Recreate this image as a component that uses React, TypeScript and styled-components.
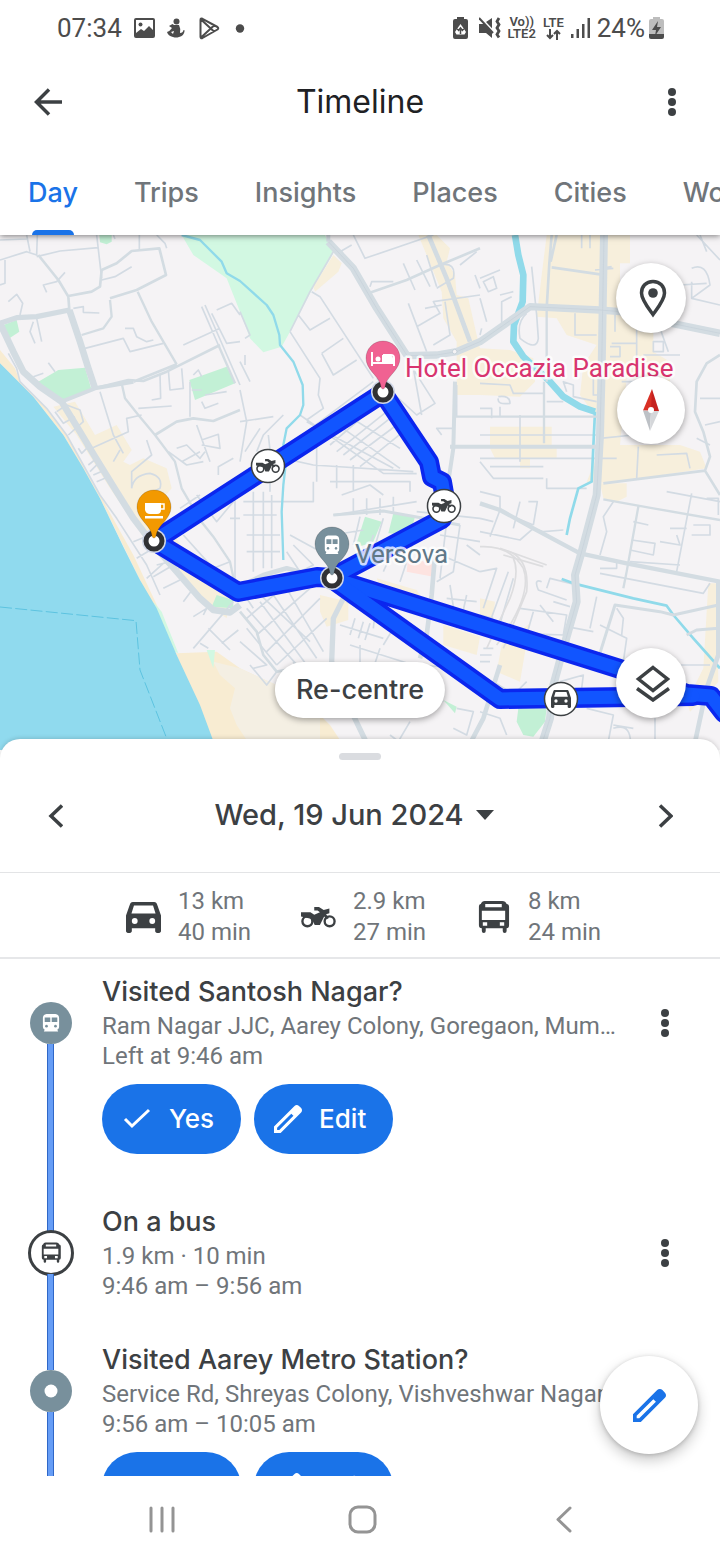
import React from "react";
import styled, { createGlobalStyle, css } from "styled-components";

const ink = "#3c4043";
const muted = "#70757a";
const blue = "#1a73e8";
const slate = "#78909c";
const display = `Inter, Roboto, sans-serif`;
const body = `Roboto, "Liberation Sans", sans-serif`;

const GlobalStyle = createGlobalStyle`
  * { box-sizing: border-box; }
  body { margin: 0; background: #fff; color: ${ink}; font-family: ${body}; }
  button { border: 0; padding: 0; background: none; color: inherit; font: inherit; cursor: pointer; }
  svg { display: block; flex: none; }
  h1, h2, p, ul { margin: 0; padding: 0; font-weight: inherit; }
`;

const Screen = styled.div`
  display: flex;
  flex-direction: column;
  height: 100vh;
  overflow: hidden;
  background: #fff;
`;

const StatusBar = styled.div`
  flex: none;
  display: flex;
  align-items: center;
  justify-content: space-between;
  height: 56px;
  padding: 0 56px 0 57px;
  color: #4c4c4c;
  font-size: 26px;
`;
const StatusGroup = styled.div<{ $gap: number }>`
  display: flex;
  align-items: center;
  gap: ${(p) => p.$gap}px;
`;
const NetworkLabel = styled.div`
  display: flex;
  flex-direction: column;
  align-items: center;
  font-size: 13px;
  font-weight: 600;
  line-height: 12px;
`;

const Header = styled.header`
  flex: none;
  position: relative;
  z-index: 2;
  box-shadow: 0 1px 6px rgba(0, 0, 0, 0.5);
  clip-path: inset(0 0 -10px 0);
  background: #fff;
`;
const AppBar = styled.div`
  display: grid;
  grid-template-columns: 48px 1fr 48px;
  align-items: center;
  height: 92px;
  padding: 0 24px;
`;
const Title = styled.h1`
  text-align: center;
  font: 400 32px/40px ${display};
  color: #202124;
`;
const IconButton = styled.button`
  display: grid;
  place-items: center;
  width: 48px;
  height: 48px;
`;
const Tabs = styled.nav`
  display: flex;
  gap: 56px;
  height: 87px;
  padding: 0 28px;
  overflow: hidden;
`;
const Tab = styled.button<{ $active?: boolean }>`
  flex: none;
  display: flex;
  flex-direction: column;
  align-items: center;
  justify-content: space-between;
  padding-top: 27px;
  color: ${(p) => (p.$active ? blue : muted)};
  font: 500 27px/36px ${display};
  &::after {
    content: "";
    width: 42px;
    height: 5px;
    border-radius: 5px 5px 0 0;
    background: ${(p) => (p.$active ? blue : "transparent")};
  }
`;

const MapArea = styled.section`
  flex: none;
  position: relative;
  height: 515px;
  background: #f5f3f5;
`;
const MapCanvas = styled.svg`
  width: 100%;
  height: 100%;
`;
const floating = css`
  position: absolute;
  background: #fff;
  box-shadow: 0 2px 6px rgba(0, 0, 0, 0.35);
`;
const RoundControl = styled.button<{ $top: number; $size: number }>`
  ${floating}
  top: ${(p) => p.$top}px;
  right: ${(p) => 69 - p.$size / 2}px;
  display: grid;
  place-items: center;
  width: ${(p) => p.$size}px;
  height: ${(p) => p.$size}px;
  border-radius: 50%;
`;
const Recentre = styled.button`
  ${floating}
  top: 427px;
  left: 50%;
  transform: translateX(-50%);
  height: 56px;
  padding: 0 21px;
  border-radius: 28px;
  font: 500 27px/56px ${display};
  color: ${ink};
  white-space: nowrap;
`;

const Sheet = styled.main`
  flex: 1;
  min-height: 0;
  position: relative;
  display: flex;
  flex-direction: column;
  margin-top: -11px;
  border-radius: 20px 20px 0 0;
  background: #fff;
  box-shadow: 0 -1px 4px rgba(0, 0, 0, 0.15);
`;
const Handle = styled.div`
  flex: none;
  align-self: center;
  width: 42px;
  height: 7px;
  margin-top: 14px;
  border-radius: 4px;
  background: #dadce0;
`;
const DateRow = styled.div`
  flex: none;
  display: flex;
  align-items: center;
  justify-content: space-between;
  height: 113px;
  padding: 0 31px;
  border-bottom: 1px solid #e3e4e6;
`;
const DateButton = styled.button`
  display: flex;
  align-items: center;
  gap: 12px;
  padding: 0 12px 2px 0;
  font: 500 29px/40px ${display};
`;
const Stats = styled.ul`
  flex: none;
  display: grid;
  grid-template-columns: repeat(3, 175px);
  justify-content: center;
  height: 86px;
  padding: 13px 0 0 57px;
  border-bottom: 2px solid #e6e7e9;
  list-style: none;
`;
const Stat = styled.li`
  display: flex;
  align-items: center;
  gap: 17px;
  height: 62px;
  color: ${muted};
  font-size: 24px;
  line-height: 31px;
  white-space: nowrap;
  svg { color: ${ink}; }
`;

const ListWrap = styled.div`
  flex: 1;
  min-height: 0;
  position: relative;
`;
const List = styled.ul`
  height: 100%;
  overflow-y: auto;
  scrollbar-width: none;
  list-style: none;
`;
const Item = styled.li`
  display: grid;
  grid-template-columns: 101px minmax(0, 1fr) 48px;
  column-gap: 1px;
  padding-right: 31px;
`;
const Rail = styled.div`
  display: flex;
  flex-direction: column;
  align-items: center;
`;
const Segment = styled.div<{ $lead?: boolean; $hidden?: boolean }>`
  width: 7px;
  ${(p) => (p.$lead ? "height: 43px;" : "flex: 1;")}
  border: solid #2f67c7;
  border-width: 0 1px;
  background: #669df6;
  visibility: ${(p) => (p.$hidden ? "hidden" : "visible")};
`;
const Marker = styled.div<{ $travel?: boolean }>`
  display: grid;
  place-items: center;
  width: 42px;
  height: 42px;
  border-radius: 50%;
  background: ${slate};
  color: #fff;
  ${(p) =>
    p.$travel &&
    css`
      width: 46px;
      height: 46px;
      margin: -2px 0;
      border: 3px solid ${ink};
      background: #fff;
      color: ${ink};
    `}
`;
const Details = styled.div`
  padding: 16px 20px 25px 0;
`;
const Place = styled.h2`
  margin-bottom: 2px;
  font: 500 27px/34px ${display};
`;
const Line = styled.p`
  overflow: hidden;
  color: ${muted};
  font-size: 24px;
  line-height: 30px;
  text-overflow: ellipsis;
  white-space: nowrap;
  &:last-child { padding-bottom: 1px; }
`;
const Actions = styled.div`
  display: flex;
  gap: 13px;
  margin: 13px 0 10px;
`;
const Pill = styled.button`
  display: flex;
  align-items: center;
  gap: 17px;
  height: 70px;
  padding: 0 27px 0 20px;
  border-radius: 35px;
  background: ${blue};
  color: #fff;
  font: 500 26px/36px ${display};
`;
const MenuCell = styled.div`
  padding-top: 40px;
`;
const Fab = styled.button`
  position: absolute;
  right: 22px;
  bottom: 22px;
  display: grid;
  place-items: center;
  width: 98px;
  height: 98px;
  border-radius: 50%;
  background: #fff;
  color: ${blue};
  box-shadow: 0 6px 14px rgba(0, 0, 0, 0.22), 0 1px 4px rgba(0, 0, 0, 0.18);
`;
const SystemNav = styled.nav`
  flex: none;
  position: relative;
  z-index: 1;
  display: grid;
  grid-template-columns: repeat(3, 1fr);
  place-items: center;
  height: 84px;
  padding: 2px 56px 0 61px;
  background: #fff;
  color: #949494;
`;

/* ---------- icons ---------- */

const MoreIcon = () => (
  <svg width="10" height="30" viewBox="0 0 10 30" fill={ink}>
    <circle cx="5" cy="5" r="4" /><circle cx="5" cy="15" r="4" /><circle cx="5" cy="25" r="4" />
  </svg>
);
const CarIcon = ({ size = 35 }: { size?: number }) => (
  <svg width={size} height={size} viewBox="3 4 18 18" fill="currentColor" fillRule="evenodd">
    <path d="M18.92 6.01C18.72 5.42 18.16 5 17.5 5h-11c-.66 0-1.21.42-1.42 1.01L3 12v8c0 .55.45 1 1 1h1c.55 0 1-.45 1-1v-1.5h12V20c0 .55.45 1 1 1h1c.55 0 1-.45 1-1v-8zM7.5 16.300a1.500 1.500 0 1 1 0-3 1.500 1.500 0 0 1 0 3zm9 0a1.500 1.500 0 1 1 0-3 1.500 1.500 0 0 1 0 3zM5.800 11l1.300-4.200h9.800L18.200 11z" />
  </svg>
);
const BikeIcon = ({ size = 35 }: { size?: number }) => (
  <svg width={size} height={size * 0.6} viewBox="0 0 74 44" fill="currentColor">
    <circle cx="13.500" cy="30" r="10.500" fill="none" stroke="currentColor" strokeWidth="5" />
    <circle cx="60.500" cy="30" r="10.500" fill="none" stroke="currentColor" strokeWidth="5" />
    <path d="M0 11h20l8 5 12-5-5-4h-7V0h10l10 6 12-3v10l-7 2 6 8-5 3-5-6-9 18H29l-6-13L0 20z" />
  </svg>
);
const BusIcon = ({ size = 35 }: { size?: number }) => (
  <svg width={size} height={size} viewBox="0 0 36 36" fill="currentColor" fillRule="evenodd">
    <path d="M9 1h18q3.500 0 4.500 3 2.500 0 2.500 3v19q0 3-2.500 3v3q0 2-2 2t-2-2v-3H10v3q0 2-2 2t-2-2v-3q-3 0-3-3V7q0-3 2-3 1-3 4-3zM9.500 4v3.500h17V4zM6 11v9.500h24V11zM7 23v3.500h4.500V23zM24.500 23v3.500H29V23z" />
  </svg>
);
const TrainShape = ({ hole }: { hole: string }) => (
  <>
    <path d="M1 5q0-4 4-4.500h10q4 .500 4 4.500v10q0 2-2 3l1 2H2l1-2q-2-1-2-3z" fill="#fff" />
    <path d="M3 4.500h6.200v5H3zM10.800 4.500H17v5h-6.200z" fill={hole} />
    <circle cx="5" cy="14" r="1.500" fill={hole} /><circle cx="15" cy="14" r="1.500" fill={hole} />
  </>
);
const PencilIcon = ({ size }: { size: number }) => (
  <svg width={size} height={size} viewBox="3 3 18 18" fill="currentColor" fillRule="evenodd">
    <path d="M3 21v-4.250L16.200 3.575q.6-.575 1.425-.575t1.425.600L20.425 5q.575.600.575 1.400t-.575 1.425L7.250 21zM5 19h1.400l9.100-9.050-1.400-1.400L5 17.600z" />
  </svg>
);
const CheckIcon = () => (
  <svg width="30" height="24" viewBox="0 0 30 24" fill="none" stroke="currentColor" strokeWidth="3">
    <path d="M3 12l7 7L27 3" />
  </svg>
);
const Chevron = ({ right }: { right?: boolean }) => (
  <svg width="16" height="24" viewBox="0 0 16 24" fill="none" stroke={ink} strokeWidth="3.500">
    <path d={right ? "M3 1.500L14 12 3 22.500" : "M15 1.500L4 12l11 10.500"} />
  </svg>
);

const StatusLeftIcons = () => (
  <>
    <svg width="21" height="20" viewBox="0 0 21 20" fill="none" stroke="#4c4c4c" strokeWidth="2">
      <rect x="1" y="1" width="19" height="18" rx="1" />
      <circle cx="6.500" cy="6.500" r="2" fill="#4c4c4c" stroke="none" />
      <path d="M2 15l5-4 3 2 5-5 5 5v6H2z" fill="#4c4c4c" stroke="none" />
    </svg>
    <svg width="18" height="20" viewBox="0 0 18 20" fill="#4c4c4c">
      <circle cx="9.500" cy="3.500" r="3" />
      <path d="M7 7h5q2 4 1 8 3 0 3.500-3l1.200.500Q17 18 12 19q-3 1-6 0-5-1-6-5 3-1 5-4l-3-2 3.500-2z" />
      <path d="M4 14l3-1-1 3z" fill="#fff" />
    </svg>
    <svg width="23" height="23" viewBox="-2 0 23 23" fill="none" stroke="#4c4c4c" strokeWidth="2" strokeLinejoin="round">
      <path d="M1.500 3q0-2 2-1.200L18.500 10q1.500 1.200 0 2.500L3.500 21q-2 .8-2-1.200zM2 2.500L15 14.500M2 20.500L15 8.500" />
    </svg>
    <svg width="13" height="9" viewBox="0 0 13 9" fill="#4c4c4c"><circle cx="8" cy="4.500" r="4.200" /></svg>
  </>
);
const StatusRightIcons = () => (
  <>
    <svg width="15" height="22" viewBox="0 0 15 22" fill="#4c4c4c">
      <path d="M4 0h7v2h2q2 0 2 2v16q0 2-2 2H2q-2 0-2-2V4q0-2 2-2h2z" />
      <path d="M7.500 7l3.500 5 2 3-1.500 2.500h-8L2 15l2-3z" fill="#fff" />
      <path d="M7.500 17v-5M5 14l2.500-3 2.500 3M4 12l1.500 1M11 12l-1.500 1" stroke="#4c4c4c" strokeWidth="1.500" fill="none" />
    </svg>
    <svg width="22" height="22" viewBox="0 0 22 22" fill="#4c4c4c">
      <path d="M0 7h4l9-6v20l-6-5H0z" />
      <path d="M1 0l14 15" stroke="#fff" strokeWidth="2" />
      <path d="M0 1l14 15" stroke="#4c4c4c" strokeWidth="2" />
      <path d="M20 1l-2 3.500 2 3-2 3.500 2 3-2 3.500 2 3" fill="none" stroke="#4c4c4c" strokeWidth="2.800" />
    </svg>
  </>
);

/* ---------- map ---------- */

const seaD = "M0 385L100 485 190 600 250 700 300 790 370 935 420 1035 470 1120 530 1260 600 1410 650 1545H0z";
const areas: [string, string][] = [
  ["#f8ecd2", "M0 345L45 400 60 440 140 520 200 600 300 780 400 960 480 1130 530 1255 650 1250 720 1300 850 1360 930 1410 990 1470 1040 1545H640L530 1260 420 1035 300 790 190 600 100 485 0 385z"],
  ["#f4efe3", "M640 1280L720 1300 850 1360 960 1410V1545H760L710 1470 690 1420 705 1360 660 1320z"],
  ["#f7efdc", "M160 515L225 500 255 550 285 600 350 570 395 645 370 680 390 690 430 670 500 700 515 760 480 800 500 860 560 960 690 1090 680 1150 600 1090 440 920 330 760 230 600z"],
  ["#c2f0d5", "M115 440L175 405 255 398 275 465 185 498z"],
  ["#c2f0d5", "M10 270L50 255 58 290 25 312z"],
  ["#c2f0d5", "M568 435L680 395 705 445 585 495z"],
  ["#c2f0d5", "M298 0H335V20L320 28 300 22z"],
  ["#d2f8e2", "M545 0H975L1000 55 930 175 870 290 845 335 790 352 750 310 720 230 680 130 580 60z"],
  ["#f7efdc", "M1000 60L1025 85 1015 110 945 170 940 155z"],
  ["#f7efdc", "M1255 0H1310L1350 40 1340 80 1365 120 1370 180 1405 190 1430 300 1440 340V480H1370V320L1330 250 1325 170z"],
  ["#f7efdc", "M1640 0H1800L1890 0V85H1860V190L1920 290 1960 290V350L2010 380V450L1880 430 1860 630 2040 630 2100 650 2120 700 1830 745 1760 740 1810 620 1800 560 1740 480 1750 390 1790 330 1700 300 1670 250 1610 245 1625 120z"],
  ["#f7efdc", "M1440 340L1530 345 1600 370 1605 440 1560 485 1440 480z"],
  ["#f7efdc", "M1470 575H1655V640H1670V670H1590V700H1560V670H1485L1470 640z"],
  ["#f7efdc", "M1800 745H1880V785L1850 800 1810 790z"],
  ["#f7efdc", "M960 1080L1045 1100 1045 1155 980 1175 960 1130z"],
  ["#f7efdc", "M1130 1030L1250 1065 1290 1125 1150 1075z"],
  ["#f7efdc", "M1330 1170L1440 1205 1430 1260 1330 1230z"],
  ["#f7efdc", "M1440 1090L1485 1100 1475 1180 1440 1165z"],
  ["#f7efdc", "M1505 1230L1590 1165 1560 1340 1490 1310z"],
  ["#f7efdc", "M2125 1045H2150L2155 1340 2120 1380 2070 1430 2060 1400 2110 1300z"],
  ["#c2f0d5", "M1095 845L1145 860 1120 920 1065 940z"],
  ["#c2f0d5", "M1180 835L1245 845 1230 900 1165 895z"],
  ["#c2f0d5", "M650 1080L700 1095 700 1120 635 1115z"],
  ["#c2f0d5", "M1555 1420H1640L1635 1460 1600 1505 1570 1500 1550 1460z"],
  ["#c2f0d5", "M1330 1395L1370 1415 1365 1435z"],
  ["#d2f8e2", "M460 1100L485 1130 535 1255 525 1250z"],
  ["#d2f8e2", "M620 1245H645L640 1300z"],
  ["#fde3e0", "M1225 965L1305 990 1300 1025 1220 1010z"],
];

const creeks: [number, string][] = [
  [7, "M545 0L600 15 665 80 680 115 720 138 800 210 820 240 838 300 840 330 880 380 908 450 910 510 900 540 860 580 850 630 858 680 850 750 845 830 850 975"],
  [20, "M1545 0L1555 60 1570 120 1568 200 1542 270 1540 320 1570 365 1650 440 1690 485 1740 515 1785 530"],
  [8, "M1785 530L1775 740 1735 760 1710 850 1700 900"],
  [8, "M1685 1032L1720 1045 1900 1090 2000 1112 2020 1140 2080 1210 2160 1300"],
];

const majorRoads: [number, string][] = [
  [20, "M0 265L40 350 70 410 120 455 185 500 240 590 285 665 350 770 400 850 465 935 530 1010 600 1090 640 1125 690 1132 720 1110"],
  [16, "M0 265L50 248 110 245 208 225"],
  [20, "M208 225L240 320 265 400 285 460"],
  [12, "M185 500L285 460 400 440"],
  [8, "M285 460L385 435 430 438 500 410 660 330M400 440L530 388"],
  [8, "M115 60L175 135 205 185 208 225M205 183L275 170 300 155 305 105 350 85 395 48 478 40 498 120 410 165 330 190"],
  [7, "M330 195L335 245 310 280 245 300M413 170L455 260 530 388"],
  [7, "M365 445L375 490 415 540 465 600 525 680 545 760 600 855 640 905 690 980 705 1050"],
  [8, "M465 600L530 560 580 550 640 558 720 525"],
  [7, "M655 330L705 445"],
  [22, "M985 20L1060 100 1130 220 1220 360M1220 362L1310 360 1370 350 1440 320 1590 215 1800 225 1860 230 1990 260 2160 295"],
  [12, "M985 20L985 0"],
  [14, "M1285 0L1340 130 1410 320"],
  [8, "M1105 175L1220 135 1320 90 1440 40"],
  [24, "M1812 0L1808 220 1805 400 1800 600 1790 780 1745 950 1725 1020 1730 1100 1690 1240 1660 1350 1650 1450 1620 1545"],
  [8, "M1655 0L1648 85 1640 220M1655 97L1800 118M1670 0L1652 80"],
  [12, "M1365 440L1360 640 1345 740M1350 635H1800"],
  [7, "M1365 545H1800M1632 440V625M1640 215V440"],
  [8, "M1810 745L2115 707 2130 665 2110 590 2085 530 2090 440 2120 385 2160 360M2115 707L2160 780"],
  [13, "M1440 805L1500 825 1600 880 1740 955 1880 985 2160 1040"],
  [7, "M1810 793L1960 820 2160 855M1915 815L1880 1010 1870 1060"],
  [14, "M720 1055L790 1020 860 1000 900 1010"],
  [16, "M1030 1090L1000 1150 995 1280 1040 1400 1110 1545"],
  [8, "M720 1130L770 1190 790 1260 830 1310 940 1290"],
  [14, "M1305 960L1295 1080 1280 1200 1260 1270M1500 1290L1450 1450 1400 1545"],
  [9, "M1000 840L1150 828 1300 855 1380 870"],
  [14, "M2155 1040L2155 1260 2120 1360 2080 1545"],
  [9, "M1795 1270L1845 1110 1980 1130 2020 1140 2155 1110M2060 1200L2090 1185 2155 1180"],
];

const minorRoads: string[] = [
  "M0 75L80 50 110 60 112 0M110 65L180 48 295 38M290 0L305 130M80 0L90 50M15 75V145L0 150M0 15L80 12M60 240L68 205 50 178 25 200",
  "M195 112L170 140 130 150 140 172M305 135L345 125 395 95M340 0L345 12M418 0V45M470 0L495 25 500 40M100 260L90 290 105 325M110 250L125 320",
  "M220 220L250 215 250 232 298 234M255 340L370 310 390 350 490 325M375 280L400 280 410 305 440 320 460 315M145 383L165 410M100 425L130 415",
  "M300 470L340 600 370 655M275 640L385 590 380 550 425 540M360 645L340 680M440 615L455 660 395 710 395 760M170 530L200 510 240 525 250 560 205 600M165 530L190 565 225 545",
  "M395 760Q400 720 450 715 490 725 480 760L440 780M480 420L482 490 455 495M415 520L515 513M505 405L510 465 550 460 545 400M570 440V545M580 420L595 405 605 425",
  "M605 215L655 330M615 210L720 450M650 225L695 205 720 240M635 235L680 325 720 320M550 330L660 280M605 500L615 520 655 505M575 465H605M615 480L680 470",
  "M505 650L560 690 610 680M530 640L560 630 600 670 615 650M545 680L600 650M590 570L630 680M605 615L655 598 660 640 605 630M655 720L655 695 700 670",
  "M235 640L245 655 260 640 255 620M265 690L290 670M270 710L300 680M280 720L315 705M290 740L325 725M25 355L50 400 60 440 140 520 200 600 300 780 350 850 440 990 480 1080",
  "M400 920L450 900 490 960M410 970L460 940M440 1030L490 985M460 1025L520 990M490 1060L540 1035M550 1100L580 1060M590 780L650 860 700 800M540 820L600 780",
  "M470 990L550 970 530 1015M580 1145L620 1120 610 1140M580 1240L700 1100M600 1225L625 1240M625 1180L690 1245M665 1225L715 1185M705 780V1050M690 850H720M550 900L640 1000 690 980",
  "M1000 50L930 170 870 290M935 170L960 185 1120 430M895 240L930 285 990 250M870 290L960 430 955 480 970 520 920 555M1060 0L1095 70 1300 0M1025 50L1050 90M1055 30L1020 50",
  "M1110 155L1115 140 1180 140M1210 85L1245 165M1250 75L1290 155M1280 60L1310 155M1320 90Q1370 80 1360 130L1310 160M1225 205L1280 350M1250 275L1320 235 1300 200 1440 180M1275 220L1325 210",
  "M1130 430L1250 540 1305 505 1200 340M1240 400L1265 540M965 355L1030 310M965 355L1000 420 1070 375M1430 50L1380 90M1425 120L1440 160M1335 200L1350 300 1300 330",
  "M900 540L1150 715 1250 716M920 590L1120 440M960 600L1140 460M990 630L1140 500M1010 650L1160 530M1030 660L1170 550M1050 675L1190 570M1080 695L1210 590M920 560L1180 700M1000 560L1200 700M1040 540L1200 640",
  "M850 670L940 690 1240 710M950 620V740M1010 690V760M1060 690V770M810 770V700L850 640M770 650L790 600 850 540M720 465L740 560 720 680M720 560L820 545M735 650L780 580M745 700L815 690 805 600M720 380L750 440",
  "M820 800H940V740M990 740H1230V770M1025 780L1110 750 1150 780M720 230L750 300 735 310M735 390V360M1000 840L1250 800M1060 790V840M1100 790V840M1140 790V840M1180 785V830",
  "M1360 580H1310L1325 600M1370 545V450M1440 130L1500 105M1440 300L1445 280M1440 190L1460 260M1450 140L1480 125 1490 160 1465 170zM1500 180L1540 170M1505 265V200L1535 185",
  "M1595 95L1610 240 1615 310Q1610 350 1560 310 1550 260 1580 235M1725 235V300H1790M1845 235V290M1835 325H1910M1910 270V430M1830 335H1860V365H1830M1785 105L1840 100M1745 40V0M1770 40V0M1800 100L1835 95",
  "M1960 320H1990V350H1960zM1980 280L2005 350M2075 100Q2120 80 2130 150L2075 190 2160 210M2040 150L2120 145M2075 140V190M2090 0L2160 75M2100 0L2120 50M1930 360H2040M2100 490H2160M2115 570L2160 560M2090 610L2130 630",
  "M1440 445L1530 450 1540 475 1630 475M1440 520H1475V550M1495 490Q1490 510 1530 505 1530 480 1495 485M1500 515V545M1560 540V680M1440 600H1800M1440 670H1850M1470 695H1630M1440 680L1480 730H1630M1640 730V760H1760",
  "M1700 470L1690 440 1720 450 1720 485 1790 500M1780 430V480H1800M1640 500H1690M1800 610L1900 600M1915 635L1910 730M1970 660L2060 655 2070 700M1865 440H1960",
  "M1500 825L1470 905M1440 770L1500 785 1500 830M1440 890L1560 915 1600 880M1560 800L1540 880M1585 800H1612L1600 870M1600 880L1630 890 1690 885M1440 850L1480 860M1540 845L1600 870",
  "M1840 800L1810 845 1820 890 1800 960M1900 860L1945 870M1895 915L1965 925 1960 960 1890 945M1890 980L2040 990M2000 770L2160 800M2075 775L2030 1010M2080 870H2130V900H2075M2010 880H2060M2120 790H2155V840M1980 920L2040 930 2030 900",
  "M1800 1015L2110 1075 2130 1045M1800 1000H1850V980M1790 1085L1770 1180M1625 1040Q1600 1030 1615 1065L1700 1095M1640 1060L1650 1030 1730 1050M1560 1120L1700 1140 1690 1200 1560 1195M1600 1130L1580 1200 1650 1200",
  "M1660 1100L1710 1115M1620 1110L1660 1160M1800 1170L1880 1210 1870 1280M1850 1120L1870 1150 1865 1200M1700 1175L1780 1190M1440 1010L1490 1000 1450 1120M1525 1010L1470 1160M1540 1030L1490 1200",
  "M1880 1280L1960 1285M2010 1290H2130M1840 1470L1900 1480M1760 1420L1840 1440 1820 1545M1965 1450V1545M1840 1480Q1900 1460 1890 1545M1680 1340L1750 1320 1740 1400M1580 1340L1550 1370M1480 1340L1560 1390",
  "M1440 1430L1500 1450 1520 1500M1370 1420L1420 1430 1400 1500 1360 1480M1050 1230L1240 1290 1420 1300M1080 1230V1300M1140 1240L1120 1300M1170 1500L1230 1545M1230 1460L1180 1545M1290 1370L1330 1400",
  "M1320 900L1440 920M1340 860L1320 1030M1380 870L1360 1010 1310 1040M1250 830L1440 850M1000 900L1090 885M1080 845L1060 930M1120 900L1090 990M1150 850L1120 950M1200 900L1150 1010M1240 920L1200 1040",
  "M1040 1100L1140 1150M1065 1150L1050 1200M1090 1160L1075 1210M1110 1165L1095 1215M1020 1170L1150 1210M1180 1180L1150 1230M1130 1090L1120 1180M1350 1050L1370 1180M1400 1080L1380 1170M1340 1090L1430 1100",
  "M740 1120L900 1300M780 1100L920 1290M820 1080L950 1270M860 1060L970 1250M740 1150L880 1030M770 1200L930 1060M800 1250L960 1090M830 1290L980 1150M720 1060L760 1120M760 1060L930 1220M740 1180L830 1290",
  "M730 800H830M730 840H830M740 900H840M740 950H840M760 770V1010M790 770V1000M815 780V1000M860 950L900 1010M880 930L940 990 900 1010M870 900L980 960M1010 940L1040 900",
  "M720 1220L800 1290 760 1300M750 1290L800 1350 830 1310M880 1280L900 1330M1400 930L1440 960M1300 950L1440 1010M1440 1140L1480 1150M1450 1240H1480M1440 1260H1475M1440 1280H1470",
];

const rails = [
  "M1440 935Q1530 930 1570 1000 1600 1080 1490 1230",
  "M1510 945Q1590 960 1580 1070L1510 1240",
  "M1500 940L1640 990M1510 960L1630 995",
  "M1540 970Q1560 1010 1530 1090L1460 1240",
];

const routes = [
  "M154 306L383 158 429 227 432 242 442 247 446 270 442 284 331 343",
  "M154 306L238 357 317 342 331 343 620 434 687 459 711 461 724 478",
  "M331 343L500 464 693 461",
];

const Pin = ({ x, y, fill, children }: { x: number; y: number; fill: string; children: React.ReactNode }) => (
  <g transform={`translate(${x} ${y})`}>
    <circle r="12" fill="#cfd6e6" />
    <circle r="8" fill="#fff" stroke="#303134" strokeWidth="5" />
    <path d="M0-3c-2 0-2-3-3-6-3-8-14-14-14-25a17 17 0 0 1 34 0c0 11-11 17-14 25-1 3-1 6-3 6z" fill={fill} stroke="rgba(0,0,0,.16)" />
    {children}
  </g>
);
const ModeBadge = ({ x, y, children }: { x: number; y: number; children: React.ReactNode }) => (
  <g transform={`translate(${x} ${y})`} color={ink}>
    <circle r="16.500" fill="#fff" stroke={ink} strokeWidth="1.500" />
    {children}
  </g>
);
const MapLabel = styled.text`
  font: 400 26px ${body};
  stroke: rgba(255, 255, 255, 0.8);
  stroke-width: 5px;
  stroke-linejoin: round;
  paint-order: stroke;
`;

const CityMap = () => (
  <MapCanvas viewBox="0 0 720 515" preserveAspectRatio="xMidYMid slice" role="img" aria-label="Map of the day's route">
    <g transform="scale(0.333333)" fill="none" strokeLinejoin="round">
      {areas.map(([fill, d]) => <path key={d} d={d} fill={fill} />)}
      <path d={seaD} fill="#90daee" />
      <path d="M0 1116L408 1157 420 1305 500 1510" stroke="#5cc3e0" strokeWidth="3" strokeDasharray="36 10" />
      <path d={minorRoads.join("")} stroke="#d3dbe3" strokeWidth="5" />
      {rails.map((d) => <path key={d} d={d} stroke="#dddddf" strokeWidth="5" />)}
      {creeks.map(([w, d]) => <path key={d} d={d} stroke="#90daea" strokeWidth={w} />)}
      {majorRoads.map(([w, d]) => <path key={d} d={d} stroke="#d3dce2" strokeWidth={w} />)}
      {majorRoads.filter(([w]) => w > 20).map(([, d]) => <path key={d} d={d} stroke="#c5d0d9" strokeWidth="2" />)}
      <circle cx="1364" cy="350" r="7" fill="#f5f3f5" stroke="#c5d0d9" strokeWidth="3" />
    </g>
    <g fill="none" strokeLinejoin="round" strokeLinecap="round">
      {routes.map((d) => <path key={d} d={d} stroke="#0b26ee" strokeWidth="20" />)}
      {routes.map((d) => <path key={d} d={d} stroke="#1155ff" strokeWidth="13" />)}
    </g>
    <MapLabel x="405" y="142" fill="#d8346f">Hotel Occazia Paradise</MapLabel>
    <MapLabel x="355" y="328" fill="#5f7888">Versova</MapLabel>
    <Pin x={383} y={157} fill="#f06292">
      <path d="M-11-40v14M11-26v-8q0-3-3-3h-7v8M-11-29h22" stroke="#fff" strokeWidth="2" fill="none" />
      <path d="M-1-37h9l3 4v4H-1z" fill="#fff" /><circle cx="-5" cy="-33" r="2.500" fill="#fff" />
    </Pin>
    <Pin x={154} y={306} fill="#f29900">
      <path d="M-9-38H7v7q0 4-4 4h-7q-4 0-5-4zM-9-25H9v2.500H-9z" fill="#fff" />
      <path d="M6-37h4v5H6" fill="none" stroke="#fff" strokeWidth="1.500" />
    </Pin>
    <Pin x={332} y={343} fill={slate}>
      <g transform="translate(-8 -43) scale(.8 .95)"><TrainShape hole={slate} /></g>
    </Pin>
    <ModeBadge x={268} y={231}><g transform="translate(-12 -7)"><BikeIcon size={24} /></g></ModeBadge>
    <ModeBadge x={444} y={271}><g transform="translate(-12 -7)"><BikeIcon size={24} /></g></ModeBadge>
    <ModeBadge x={561} y={464}><g transform="translate(-10 -10)"><CarIcon size={20} /></g></ModeBadge>
  </MapCanvas>
);

/* ---------- timeline ---------- */

type Entry = { title: string; lines: string[]; kind: "train" | "bus" | "dot"; confirm?: boolean };
const entries: Entry[] = [
  { title: "Visited Santosh Nagar?", lines: ["Ram Nagar JJC, Aarey Colony, Goregaon, Mumbai, Maharashtra", "Left at 9:46 am"], kind: "train", confirm: true },
  { title: "On a bus", lines: ["1.9 km · 10 min", "9:46 am – 9:56 am"], kind: "bus" },
  { title: "Visited Aarey Metro Station?", lines: ["Service Rd, Shreyas Colony, Vishveshwar Nagar, Goregaon", "9:56 am – 10:05 am"], kind: "dot", confirm: true },
];

const TimelineEntry = ({ entry, first }: { entry: Entry; first: boolean }) => (
  <Item>
    <Rail>
      <Segment $lead $hidden={first} />
      <Marker $travel={entry.kind === "bus"}>
        {entry.kind === "train" && <svg width="18" height="20" viewBox="0 0 20 21"><TrainShape hole={slate} /></svg>}
        {entry.kind === "bus" && <BusIcon size={22} />}
        {entry.kind === "dot" && <svg width="14" height="14" viewBox="0 0 14 14"><circle cx="7" cy="7" r="6.500" fill="#fff" /></svg>}
      </Marker>
      <Segment />
    </Rail>
    <Details>
      <Place>{entry.title}</Place>
      {entry.lines.map((line) => <Line key={line}>{line}</Line>)}
      {entry.confirm && (
        <Actions>
          <Pill><CheckIcon />Yes</Pill>
          <Pill><PencilIcon size={28} />Edit</Pill>
        </Actions>
      )}
    </Details>
    <MenuCell><IconButton aria-label="More options"><MoreIcon /></IconButton></MenuCell>
  </Item>
);

const tabs = ["Day", "Trips", "Insights", "Places", "Cities", "World"];

export default function App() {
  return (
    <Screen>
      <GlobalStyle />
      <StatusBar>
        <StatusGroup $gap={12}>
          <span>07:34</span>
          <StatusLeftIcons />
        </StatusGroup>
        <StatusGroup $gap={7}>
          <StatusGroup $gap={11}><StatusRightIcons /></StatusGroup>
          <NetworkLabel><span>Vo))</span><span>LTE2</span></NetworkLabel>
          <NetworkLabel>
            <span>LTE</span>
            <svg width="15" height="11" viewBox="0 0 15 11" fill="none" stroke="#4c4c4c" strokeWidth="2">
              <path d="M4 0v9M1 6l3 3 3-3M11 11V2M8 5l3-3 3 3" />
            </svg>
          </NetworkLabel>
          <svg width="19" height="20" viewBox="0 0 19 20" fill="#4c4c4c">
            <path d="M0 16h2.500v4H0zM5.500 11H8v9H5.500zM11 6h2.500v14H11zM16.500 0H19v20h-2.500z" />
          </svg>
          <StatusGroup $gap={4}>
            <span>24%</span>
            <svg width="15" height="22" viewBox="0 0 15 22">
              <path d="M4 0h7v2h2q2 0 2 2v14H0V4q0-2 2-2h2z" fill="#bdbdbd" />
              <path d="M0 17h15v3q0 2-2 2H2q-2 0-2-2z" fill="#4c4c4c" />
              <path d="M9 4L3 13h4l-1 6 6-9H8z" fill="#4c4c4c" />
            </svg>
          </StatusGroup>
        </StatusGroup>
      </StatusBar>

      <Header>
        <AppBar>
          <IconButton aria-label="Back">
            <svg width="28" height="28" viewBox="0 0 28 28" fill="none" stroke={ink} strokeWidth="3.500">
              <path d="M28 14H3M15 1.500L2.500 14 15 26.500" />
            </svg>
          </IconButton>
          <Title>Timeline</Title>
          <IconButton aria-label="More options"><MoreIcon /></IconButton>
        </AppBar>
        <Tabs>
          {tabs.map((name, i) => <Tab key={name} $active={i === 0}>{name}</Tab>)}
        </Tabs>
      </Header>

      <MapArea>
        <CityMap />
        <RoundControl $top={28} $size={70} aria-label="Show places">
          <svg width="32" height="40" viewBox="0 0 32 40">
            <path d="M18 3.500c7 0 11.500 5 11.500 11.500C29.500 22 22 31 18 36.500 14 31 6.500 22 6.500 15 6.500 8.500 11 3.500 18 3.500z" fill="none" stroke={ink} strokeWidth="3.500" />
            <circle cx="18" cy="15" r="4.800" fill={ink} />
          </svg>
        </RoundControl>
        <RoundControl $top={141} $size={68} aria-label="Compass">
          <svg width="18" height="42" viewBox="0 0 18 42">
            <path d="M10 0L1 21.500h9z" fill="#d93025" /><path d="M10 0l7 22H9z" fill="#c5221f" />
            <path d="M1 21.500L8 42l1-20z" fill="#bdc1c6" /><path d="M17 22L8 42l1-20z" fill="#d5d7da" />
            <circle cx="9" cy="21" r="3" fill="#fff" />
          </svg>
        </RoundControl>
        <RoundControl $top={413} $size={70} aria-label="Map layers">
          <svg width="38" height="38" viewBox="0 0 38 38" fill="none" stroke={ink} strokeWidth="3.500">
            <path d="M21 3.500L35.500 15 21 26.500 6.500 15zM5 24.500L21 36l16-11.500" />
          </svg>
        </RoundControl>
        <Recentre>Re-centre</Recentre>
      </MapArea>

      <Sheet>
        <Handle />
        <DateRow>
          <IconButton aria-label="Previous day"><Chevron /></IconButton>
          <DateButton>
            Wed, 19 Jun 2024
            <svg width="18" height="10" viewBox="0 0 18 10" fill={ink}><path d="M0 0h18l-9 10z" /></svg>
          </DateButton>
          <IconButton aria-label="Next day"><Chevron right /></IconButton>
        </DateRow>
        <Stats>
          <Stat><CarIcon /><div>13 km<br />40 min</div></Stat>
          <Stat><BikeIcon /><div>2.9 km<br />27 min</div></Stat>
          <Stat><BusIcon /><div>8 km<br />24 min</div></Stat>
        </Stats>
        <ListWrap>
          <List>
            {entries.map((entry, i) => <TimelineEntry key={entry.title} entry={entry} first={i === 0} />)}
          </List>
          <Fab aria-label="Edit timeline"><PencilIcon size={33} /></Fab>
        </ListWrap>
      </Sheet>

      <SystemNav>
        <IconButton aria-label="Recent apps">
          <svg width="26" height="27" viewBox="0 0 26 27" stroke="currentColor" strokeWidth="3" strokeLinecap="round">
            <path d="M2 2v23M13 2v23M24 2v23" />
          </svg>
        </IconButton>
        <IconButton aria-label="Home">
          <svg width="29" height="29" viewBox="0 0 29 29" fill="none" stroke="currentColor" strokeWidth="3">
            <rect x="2" y="2" width="25" height="25" rx="8" />
          </svg>
        </IconButton>
        <IconButton aria-label="Back">
          <svg width="16" height="27" viewBox="0 0 16 27" fill="none" stroke="currentColor" strokeWidth="3" strokeLinecap="round" strokeLinejoin="round">
            <path d="M14 2L2 13.500 14 25" />
          </svg>
        </IconButton>
      </SystemNav>
    </Screen>
  );
}
